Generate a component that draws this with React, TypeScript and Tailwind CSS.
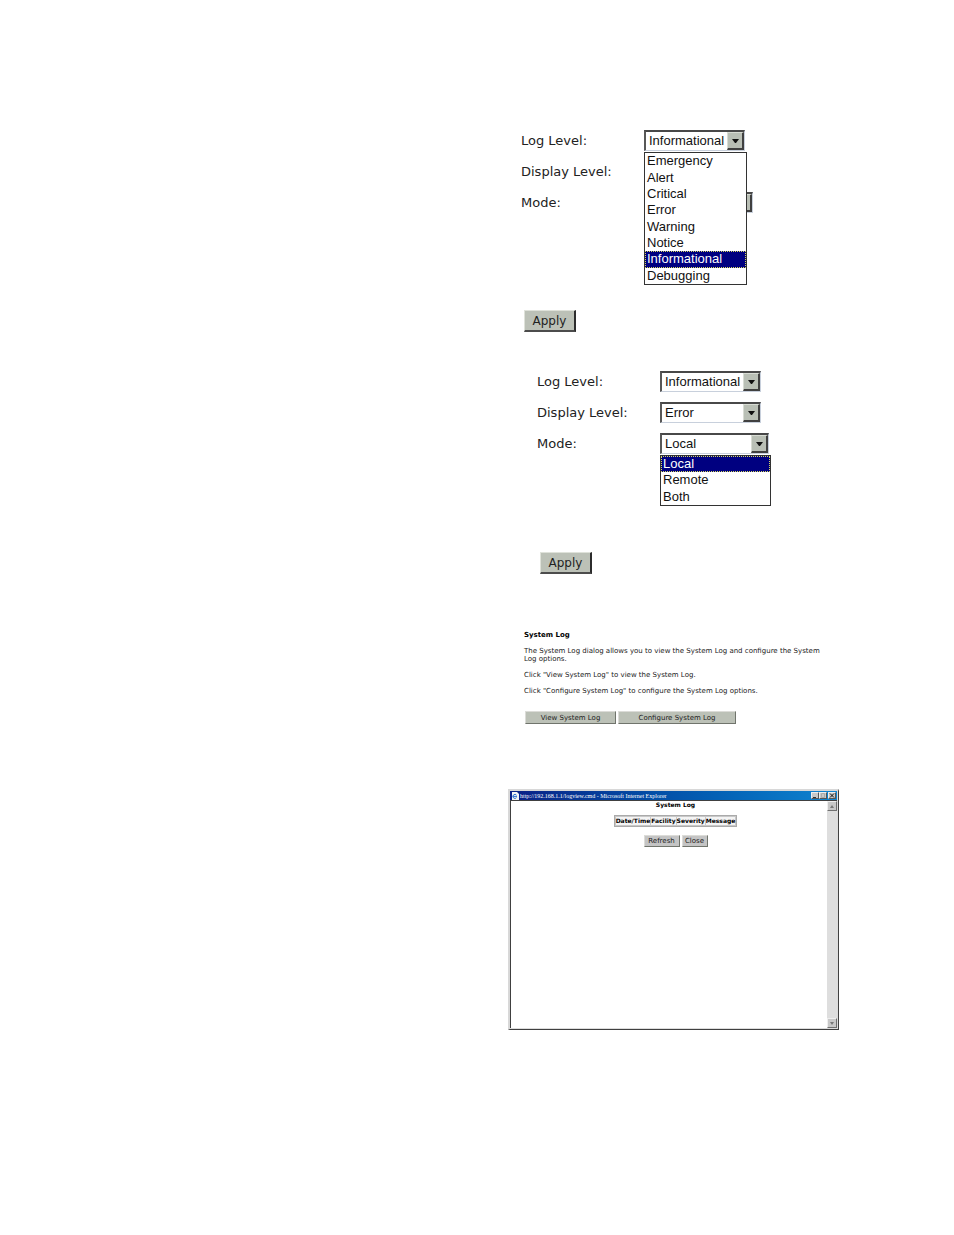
import React from 'react';

const levels = ['Emergency', 'Alert', 'Critical', 'Error', 'Warning', 'Notice', 'Informational', 'Debugging'];
const modes = ['Local', 'Remote', 'Both'];

const sans = "font-['DejaVu_Sans',sans-serif]";
const arial = "font-['Liberation_Sans',sans-serif]";

interface SelectFieldProps {
  id: string;
  label: string;
  value: string;
  options: string[];
  width: string;
  open?: boolean;
  listClass?: string;
}

const SelectField: React.FC<SelectFieldProps> = ({ id, label, value, options, width, open, listClass }) => (
  <div className="flex h-[21px] items-center">
    <label htmlFor={id} className={`w-[123px] text-[13px] leading-5 text-[#222] ${sans}`}>
      {label}
    </label>
    <div className={`relative h-[21px] ${width}`}>
      <select
        id={id}
        defaultValue={value}
        className={`block h-full w-full appearance-none rounded-none border-t-2 border-l-2 border-r border-b border-t-[#484848] border-l-[#585858] border-r-[#c8d0dc] border-b-[#c8d0dc] bg-white pl-[3px] text-[13px] leading-4 text-[#111] ${arial}`}
      >
        {options.map((o) => (
          <option key={o}>{o}</option>
        ))}
      </select>
      <span className="pointer-events-none absolute top-[2px] right-px bottom-px flex w-[17px] items-center justify-center border-t border-r-2 border-b-2 border-l border-t-[#d8dcd4] border-r-[#404040] border-b-[#404040] border-l-[#d8dcd4] bg-[#b9bfb5]">
        <svg width="7" height="4" viewBox="0 0 7 4" aria-hidden="true">
          <path d="M0 0h7L4 4H3z" fill="#111" />
        </svg>
      </span>
      {open && (
        <ul
          role="listbox"
          aria-label={label}
          className={`absolute top-full left-0 z-10 mt-px grid border border-[#333] bg-white text-[13px] leading-4 text-[#111] ${arial} ${listClass}`}
        >
          {options.map((o) => (
            <li
              key={o}
              role="option"
              aria-selected={o === value}
              className={`flex items-center pl-[2px] ${
                o === value ? 'bg-[#000080] text-white outline-1 -outline-offset-1 outline-dotted outline-[#d8d860]' : ''
              }`}
            >
              {o}
            </li>
          ))}
        </ul>
      )}
    </div>
  </div>
);

const ApplyButton = () => (
  <button
    type="button"
    className={`h-[22px] w-[52px] border-t border-r-2 border-b-2 border-l border-t-[#dfe2da] border-r-[#2c2c2c] border-b-[#4c4c4c] border-l-[#dfe2da] bg-[#bcc1b7] text-[12px] leading-4 text-[#222] ${sans}`}
  >
    Apply
  </button>
);

const SmallButton: React.FC<{ className: string; children: React.ReactNode }> = ({ className, children }) => (
  <button
    type="button"
    className={`flex items-center justify-center border border-t-[#dcdcd8] border-r-[#70746c] border-b-[#70746c] border-l-[#dcdcd8] text-[7px] leading-[8px] text-[#222] ${className}`}
  >
    {children}
  </button>
);

const TitleButton: React.FC<{ label: string; d: string; stroke: string }> = ({ label, d, stroke }) => (
  <button
    type="button"
    aria-label={label}
    className="h-[7px] w-[8px] border border-t-[#eee] border-r-[#555] border-b-[#555] border-l-[#eee] bg-[#c8c8c8]"
  >
    <svg className="block" width="6" height="5" viewBox="0 0 6 5">
      <path d={d} fill="none" stroke={stroke} />
    </svg>
  </button>
);

const ScrollArrow: React.FC<{ label: string; d: string }> = ({ label, d }) => (
  <button
    type="button"
    aria-label={label}
    className="flex h-[10px] w-full items-center justify-center border border-t-[#eee] border-r-[#707070] border-b-[#707070] border-l-[#eee] bg-[#c8c8c8]"
  >
    <svg width="4" height="3" viewBox="0 0 4 3">
      <path d={d} fill="#777" />
    </svg>
  </button>
);

const LogWindow = () => (
  <section className="flex h-[241px] flex-col border-t-2 border-r border-b border-l-2 border-t-[#d8d8d8] border-r-[#404040] border-b-[#404040] border-l-[#d8d8d8] bg-[#dcdcdc] pr-px">
    <header className="flex h-[9px] items-center bg-linear-to-r from-[#0a1f86] to-[#1084d0] pl-px">
      <svg width="8" height="8" viewBox="0 0 8 8" aria-hidden="true">
        <path d="M1 0h5l2 2v6H1z" fill="#f4f4f4" />
        <path d="M5.5 3.2A2 2 0 1 0 5.5 5.6M2 4.4h4" fill="none" stroke="#2c6fd0" />
      </svg>
      <h2 className="flex-1 pl-px font-['Liberation_Serif',serif] text-[6px] leading-[8px] whitespace-nowrap text-white">
        http://192.168.1.1/logview.cmd - Microsoft Internet Explorer
      </h2>
      <div className="flex pr-px">
        <TitleButton label="Minimize" d="M1 4.5h3" stroke="#333" />
        <TitleButton label="Maximize" d="M1.5 .5h3v4h-3z" stroke="#aaa" />
        <span className="w-px" />
        <TitleButton label="Close window" d="M1 .5l4 4M5 .5l-4 4" stroke="#111" />
      </div>
    </header>
    <div className="mb-px flex flex-1 border-t border-l border-[#404040]">
      <div className={`flex flex-1 flex-col items-center bg-white pl-[13px] ${sans}`}>
        <h3 className="text-[6px] leading-[8px] font-bold">System Log</h3>
        <table className="mt-[6px] border-separate border-spacing-px border border-[#aaa] bg-[#c8c8c8] text-[6px] leading-[8px]">
          <thead>
            <tr>
              {['Date/Time', 'Facility', 'Severity', 'Message'].map((h) => (
                <th key={h} scope="col" className="bg-[#f4f4f4] font-bold">
                  {h}
                </th>
              ))}
            </tr>
          </thead>
        </table>
        <div className="mt-[8px] flex gap-[2px]">
          <SmallButton className="h-[12px] w-[36px] bg-[#c4c4c4]">Refresh</SmallButton>
          <SmallButton className="h-[12px] w-[26px] bg-[#c4c4c4]">Close</SmallButton>
        </div>
      </div>
      <div className="flex w-[10px] flex-col justify-between bg-[#dedede]">
        <ScrollArrow label="Scroll up" d="M0 3h4L2 0z" />
        <ScrollArrow label="Scroll down" d="M0 0h4L2 3z" />
      </div>
    </div>
  </section>
);

export default function App() {
  return (
    <main className="min-h-screen bg-white pt-[130px] pr-[115px] pb-[200px] pl-[508px] text-black">
      <form className="pl-[13px]">
        <div className="flex flex-col gap-[10px]">
          <SelectField id="log-1" label="Log Level:" value="Informational" options={levels} width="w-[101px]" open listClass="h-[133px] w-[103px]" />
          <SelectField id="display-1" label="Display Level:" value="Error" options={levels} width="w-[101px]" />
          <SelectField id="mode-1" label="Mode:" value="Local" options={modes} width="w-[109px]" />
        </div>
        <div className="mt-[97px] flex pl-[3px]">
          <ApplyButton />
        </div>
      </form>

      <form className="mt-[39px] pl-[29px]">
        <div className="flex flex-col gap-[10px]">
          <SelectField id="log-2" label="Log Level:" value="Informational" options={levels} width="w-[101px]" />
          <SelectField id="display-2" label="Display Level:" value="Error" options={levels} width="w-[101px]" />
          <SelectField id="mode-2" label="Mode:" value="Local" options={modes} width="w-[109px]" open listClass="h-[51px] w-[111px]" />
        </div>
        <div className="mt-[98px] flex pl-[3px]">
          <ApplyButton />
        </div>
      </form>

      <section className={`mt-[57px] pl-[16px] text-[7px] leading-[8px] text-[#222] ${sans}`}>
        <h2 className="font-bold text-black">System Log</h2>
        <p className="mt-[8px] pr-[12px]">
          The System Log dialog allows you to view the System Log and configure the System Log options.
        </p>
        <p className="mt-[8px]">Click "View System Log" to view the System Log.</p>
        <p className="mt-[8px]">Click "Configure System Log" to configure the System Log options.</p>
        <div className="mt-[16px] flex gap-[2px] pl-px">
          <SmallButton className="h-[13px] w-[91px] bg-[#bcc1b7]">View System Log</SmallButton>
          <SmallButton className="h-[13px] w-[118px] bg-[#bcc1b7]">Configure System Log</SmallButton>
        </div>
      </section>

      <div className="mt-[65px]">
        <LogWindow />
      </div>
    </main>
  );
}
